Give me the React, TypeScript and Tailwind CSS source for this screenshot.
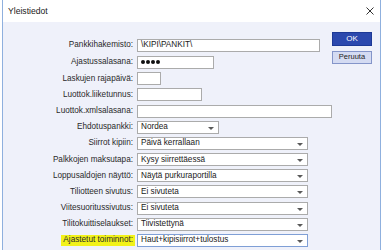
import React from "react";

type Field =
  | { label: string; kind: "text"; width: number; value?: string; focus?: boolean; mark?: boolean }
  | { label: string; kind: "password"; width: number; focus?: boolean; mark?: boolean }
  | { label: string; kind: "select"; width: number; value: string; focus?: boolean; mark?: boolean };

const fields: Field[] = [
  { label: "Pankkihakemisto:", kind: "text", width: 183, value: "\\KIPI\\PANKIT\\" },
  { label: "Ajastussalasana:", kind: "password", width: 77 },
  { label: "Laskujen rajapäivä:", kind: "text", width: 24 },
  { label: "Luottok.liiketunnus:", kind: "text", width: 65 },
  { label: "Luottok.xmlsalasana:", kind: "text", width: 195 },
  { label: "Ehdotuspankki:", kind: "select", width: 82, value: "Nordea" },
  { label: "Siirrot kipiin:", kind: "select", width: 171, value: "Päivä kerrallaan" },
  { label: "Palkkojen maksutapa:", kind: "select", width: 171, value: "Kysy siirrettäessä" },
  { label: "Loppusaldojen näyttö:", kind: "select", width: 171, value: "Näytä purkuraportilla" },
  { label: "Tiliotteen sivutus:", kind: "select", width: 171, value: "Ei sivuteta" },
  { label: "Viitesuoritussivutus:", kind: "select", width: 171, value: "Ei sivuteta" },
  { label: "Tilitokuittiselaukset:", kind: "select", width: 171, value: "Tiivistettynä" },
  {
    label: "Ajastetut toiminnot:",
    kind: "select",
    width: 171,
    value: "Haut+kipisiirrot+tulostus",
    focus: true,
    mark: true,
  },
];

function Control({ f }: { f: Field }) {
  const border = f.focus ? "border-[#7f9fd6]" : "border-[#ababab]";
  return (
    <div
      className={`relative flex h-[13px] items-center border bg-white pl-[3px] text-[#1a1a1a] ${border}`}
      style={{ width: f.width }}
    >
      {f.kind === "password" ? (
        <div className="flex gap-[1px]">
          {[0, 1, 2, 3].map((i) => (
            <div key={i} className="h-[4px] w-[4px] rounded-full bg-[#111]" />
          ))}
        </div>
      ) : (
        <span className="leading-none">{f.value}</span>
      )}
      {f.kind === "select" && (
        <div className="absolute right-[4px] top-[5px] h-0 w-0 border-l-[3px] border-r-[3px] border-t-[3px] border-l-transparent border-r-transparent border-t-[#5a5a5a]" />
      )}
    </div>
  );
}

export default function App() {
  return (
    <div
      className="relative h-[250px] w-[383px] overflow-hidden bg-white text-[8.2px]"
      style={{ fontFamily: '"Liberation Sans", Arial, sans-serif' }}
    >
      <div className="ml-[2px] flex h-full w-[379px] flex-col border-l border-r border-[#8fb0de]">
        {/* title bar */}
        <div className="flex h-[22px] shrink-0 items-center justify-between bg-white pl-[5px] pr-[5px]">
          <span className="text-[8.6px] text-[#1a1a1a]">Yleistiedot</span>
          <svg width="8" height="8" viewBox="0 0 8 8" className="mr-[1px]">
            <path d="M0.5 0.5 L7.5 7.5 M7.5 0.5 L0.5 7.5" stroke="#333" strokeWidth="1" />
          </svg>
        </div>

        {/* body */}
        <div className="flex flex-1 bg-[#eff1fa]">
          <div className="flex flex-1 flex-col gap-[3.2px] pt-[17px]">
            {fields.map((f, i) => (
              <div key={f.label} className={`flex items-center gap-[4px] ${i === 0 ? "mb-[0.8px]" : ""}`}>
                <div className="flex w-[130px] justify-end text-[#2a2a2a]">
                  {f.mark ? (
                    <span className="-mr-[2px] bg-[#f2f21a] py-[1.5px] pl-[2px] pr-[2px] leading-none">
                      {f.label}
                    </span>
                  ) : (
                    <span className="leading-none">{f.label}</span>
                  )}
                </div>
                <Control f={f} />
              </div>
            ))}
          </div>

          <div className="mr-[8px] flex w-[46px] flex-col gap-[5px] pt-[9.5px]">
            <button
              type="button"
              className="flex h-[14px] items-center justify-center border border-[#1d3996] bg-[#2c49ae] text-[8px] text-white"
            >
              OK
            </button>
            <button
              type="button"
              className="flex h-[13px] items-center justify-center border border-[#8495c9] bg-[#d4dbf2] text-[7.5px] text-[#222]"
            >
              Peruuta
            </button>
          </div>
        </div>
      </div>
    </div>
  );
}
